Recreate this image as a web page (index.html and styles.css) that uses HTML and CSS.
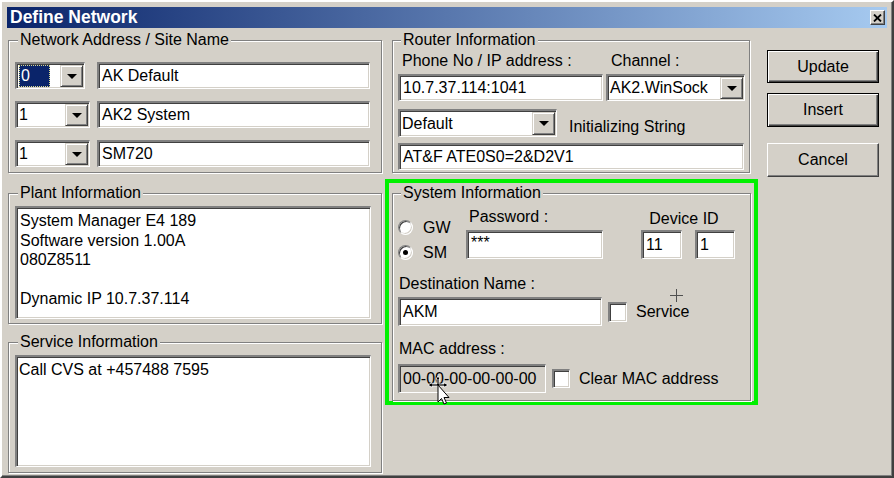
FILE: index.html
```html
<!DOCTYPE html>
<html lang="en">
<head>
    <meta charset="UTF-8">
    <title>Define Network</title>
    <link rel="stylesheet" href="styles.css">
</head>
<body>
    <div class="window">
        <div class="titlebar">
            <span class="title">Define Network</span>
            <span class="close">
                <svg width="9" height="8" viewBox="0 0 9 8"><path d="M1 0.5 L8 7.5 M8 0.5 L1 7.5" stroke="#000" stroke-width="1.8"/></svg>
            </span>
        </div>

        <div class="content">
            <!-- left column -->
            <div class="col-left">
                <div class="group net-group">
                    <span class="group-title">Network Address / Site Name</span>
                    <div class="net-rows">
                        <div class="net-row">
                            <div class="combo-cell">
                                <div class="combo combo-addr">
                                    <span class="combo-value"><span class="selected">0</span></span>
                                    <span class="drop"></span>
                                </div>
                            </div>
                            <div class="field name-field">AK Default</div>
                        </div>
                        <div class="net-row">
                            <div class="combo-cell">
                                <div class="combo combo-num">
                                    <span class="combo-value">1</span>
                                    <span class="drop"></span>
                                </div>
                            </div>
                            <div class="field name-field">AK2 System</div>
                        </div>
                        <div class="net-row">
                            <div class="combo-cell">
                                <div class="combo combo-num">
                                    <span class="combo-value">1</span>
                                    <span class="drop"></span>
                                </div>
                            </div>
                            <div class="field name-field">SM720</div>
                        </div>
                    </div>
                </div>

                <div class="group plant-group">
                    <span class="group-title">Plant Information</span>
                    <div class="memo plant-memo">System Manager E4 189<br>Software version 1.00A<br>080Z8511<br><br>Dynamic IP 10.7.37.114</div>
                </div>

                <div class="group service-group">
                    <span class="group-title">Service Information</span>
                    <div class="memo service-memo">Call CVS at +457488 7595</div>
                </div>
            </div>

            <!-- middle column -->
            <div class="col-mid">
                <div class="group router-group">
                    <span class="group-title">Router Information</span>
                    <div class="router-labels">
                        <span class="phone-label">Phone No / IP address :</span>
                        <span class="channel-label">Channel :</span>
                    </div>
                    <div class="router-row first">
                        <div class="field phone-field">10.7.37.114:1041</div>
                        <div class="combo channel-combo">
                            <span class="combo-value">AK2.WinSock</span>
                            <span class="drop"></span>
                        </div>
                    </div>
                    <div class="router-row second">
                        <div class="combo default-combo">
                            <span class="combo-value">Default</span>
                            <span class="drop"></span>
                        </div>
                        <span class="init-label">Initializing String</span>
                    </div>
                    <div class="router-row third">
                        <div class="field init-field">AT&amp;F ATE0S0=2&amp;D2V1</div>
                    </div>
                </div>

                <div class="highlight">
                    <div class="group system-group">
                        <span class="group-title">System Information</span>
                        <div class="sys-top">
                            <div class="radios">
                                <div class="radio-row"><span class="radio"></span><span>GW</span></div>
                                <div class="radio-row"><span class="radio checked"></span><span>SM</span></div>
                            </div>
                            <div class="password-col">
                                <div class="pw-label">Password :</div>
                                <div class="field pw-field">***</div>
                            </div>
                            <div class="device-col">
                                <div class="device-label">Device ID</div>
                                <div class="device-inputs">
                                    <div class="field dev-a">11</div>
                                    <div class="field dev-b">1</div>
                                </div>
                            </div>
                        </div>

                        <div class="sys-label dest-label">Destination Name :</div>
                        <div class="sys-row dest-row">
                            <div class="field dest-field">AKM</div>
                            <span class="checkbox"></span>
                            <span class="check-label">Service</span>
                        </div>

                        <div class="sys-label mac-label">MAC address :</div>
                        <div class="sys-row mac-row">
                            <div class="field mac-field">00-00-00-00-00-00</div>
                            <span class="checkbox small"></span>
                            <span class="check-label">Clear MAC address</span>
                        </div>

                        <span class="crosshair"></span>
                        <svg class="pointer" width="24" height="32" viewBox="0 0 24 32">
                            <path d="M11 3 L13 6 L12 6 L12 11 L17 11 L17 9.5 L21 12 L17 14.5 L17 13 L5 13 L5 14.5 L1 12 L5 9.5 L5 11 L10 11 L10 6 L9 6 Z" fill="#000" stroke="#fff" stroke-width="0.8"/>
                            <path d="M11 12 L11 29 L14.5 25.5 L17 31 L19.5 30 L17 24.5 L22 24.5 Z" fill="#fff" stroke="#000" stroke-width="1"/>
                        </svg>
                    </div>
                </div>
            </div>

            <!-- buttons -->
            <div class="col-buttons">
                <div class="btn default update">Update</div>
                <div class="btn default insert">Insert</div>
                <div class="btn cancel">Cancel</div>
            </div>
        </div>
    </div>
</body>
</html>
```

FILE: styles.css
```css
* {
    box-sizing: border-box;
}

body {
    margin: 0;
    font-family: "Liberation Sans", Arial, sans-serif;
    font-size: 16px;
    color: #000;
    background: #d4d0c8;
}

.window {
    width: 894px;
    height: 478px;
    background: #d4d0c8;
    border: 2px solid;
    border-color: #ffffff #404040 #404040 #ffffff;
    box-shadow: inset -1px -1px #808080;
    padding: 5px;
    overflow: hidden;
}

/* title bar */
.titlebar {
    height: 21px;
    display: flex;
    align-items: center;
    justify-content: space-between;
    padding: 0 2px 0 3px;
    background: linear-gradient(to right, #0a246a, #a6caf0);
}

.title {
    color: #fff;
    font-weight: bold;
    font-size: 17.5px;
    line-height: 21px;
}

.close {
    width: 15px;
    height: 15px;
    display: flex;
    align-items: center;
    justify-content: center;
    background: #d4d0c8;
    border: 1px solid;
    border-color: #ffffff #404040 #404040 #ffffff;
    box-shadow: inset -1px -1px #808080;
}

.content {
    display: flex;
    align-items: flex-start;
    margin: 12px 0 0 1px;
}

/* etched group frame */
.group {
    border: 1px solid #808080;
    box-shadow: inset 1px 1px #fff, 1px 1px #fff;
}

.group-title {
    display: table;
    margin: -10px 0 0 9px;
    padding: 0 2px;
    line-height: 18px;
    background: #d4d0c8;
}

.router-group .group-title,
.system-group .group-title {
    margin-left: 3px;
}

/* sunken controls */
.field, .combo, .memo {
    background: #fff;
    border-style: solid;
    border-width: 2px 1px 1px 2px;
    border-color: #808080 #ffffff #ffffff #808080;
    box-shadow: inset 1px 1px #404040, inset -1px -1px #d4d0c8;
}

.field {
    display: flex;
    align-items: center;
    padding-left: 3px;
    white-space: nowrap;
}

.combo {
    display: flex;
    align-items: stretch;
}

.combo-value {
    flex: 1;
    display: flex;
    align-items: center;
    padding-left: 2px;
    white-space: nowrap;
    overflow: hidden;
}

.drop {
    width: 23px;
    margin: 1px 1px 1px 0;
    display: flex;
    align-items: center;
    justify-content: center;
    background: #d4d0c8;
    border: 1px solid;
    border-color: #d4d0c8 #404040 #404040 #d4d0c8;
    box-shadow: inset 1px 1px #fff, inset -1px -1px #808080;
}

.drop::after {
    content: "";
    border-left: 5px solid transparent;
    border-right: 5px solid transparent;
    border-top: 5px solid #000;
}

/* left column */
.col-left {
    width: 374px;
    display: flex;
    flex-direction: column;
}

.net-group {
    height: 133px;
}

.net-rows {
    margin: 13px 0 0 6px;
    display: flex;
    flex-direction: column;
    gap: 12px;
}

.net-row {
    display: flex;
    height: 27px;
}

.combo-cell {
    width: 82px;
}

.combo-addr {
    width: 70px;
    height: 100%;
}

.combo-num {
    width: 75px;
    height: 100%;
}

.selected {
    display: flex;
    align-items: center;
    height: 100%;
    width: 31px;
    margin: 1px 0 1px 1px;
    padding-left: 2px;
    background: #0a246a;
    color: #fff;
    outline: 1px dotted #d8d890;
    outline-offset: -1px;
}

.combo-addr .combo-value {
    padding: 1px 2px 1px 1px;
}

.name-field {
    width: 273px;
    height: 100%;
}

.plant-group {
    margin-top: 20px;
    height: 131px;
}

.service-group {
    margin-top: 18px;
    height: 131px;
}

.memo {
    margin: 4px 0 0 6px;
    width: 356px;
    padding: 3px 3px;
    line-height: 19.5px;
}

.plant-memo {
    height: 113px;
}

.service-memo {
    height: 112px;
    padding-left: 2px;
}

/* middle column */
.col-mid {
    width: 373px;
    margin-left: 3px;
}

.router-group {
    margin-left: 7px;
    width: 358px;
    height: 133px;
    padding-left: 5px;
}

.router-labels {
    display: flex;
    margin-top: 3px;
    line-height: 18px;
}

.phone-label {
    width: 208px;
    padding-left: 4px;
}

.channel-label {
    padding-left: 5px;
}

.router-row {
    display: flex;
}

.router-row.first {
    margin-top: 4px;
    height: 27px;
    gap: 3px;
}

.phone-field {
    width: 205px;
}

.channel-combo {
    width: 139px;
}

.router-row.second {
    margin-top: 8px;
    height: 28px;
}

.default-combo {
    width: 159px;
}

.init-label {
    align-self: flex-end;
    margin: 0 0 1px 12px;
    line-height: 18px;
}

.router-row.third {
    margin-top: 6px;
    height: 27px;
}

.init-field {
    width: 346px;
}

/* highlighted system information */
.highlight {
    margin-top: 6px;
    border: 4px solid #00f000;
    padding: 10px 0 0 3px;
}

.system-group {
    position: relative;
    width: 359px;
    height: 208px;
    padding-left: 5px;
}

.sys-top {
    display: flex;
    align-items: flex-start;
    margin-top: 6px;
}

.radios {
    width: 68px;
    margin-top: 12px;
}

.radio-row {
    display: flex;
    align-items: center;
    height: 15px;
    gap: 10px;
    line-height: 18px;
}

.radio-row + .radio-row {
    margin-top: 10px;
}

.radio {
    position: relative;
    width: 15px;
    height: 15px;
    border-radius: 50%;
    background: #fff;
    border: 1px solid;
    border-color: #808080 #ffffff #ffffff #808080;
    box-shadow: inset 1px 1px #404040, inset -1px -1px #d4d0c8;
}

.radio.checked::after {
    content: "";
    position: absolute;
    left: 4px;
    top: 4px;
    width: 5px;
    height: 5px;
    border-radius: 50%;
    background: #000;
}

.password-col {
    width: 137px;
}

.pw-label {
    line-height: 18px;
    padding-left: 3px;
}

.pw-field {
    margin-top: 4px;
    height: 29px;
    align-items: flex-start;
    padding-top: 2px;
}

.device-col {
    margin-left: 38px;
    width: 94px;
}

.device-label {
    margin-top: 2px;
    line-height: 18px;
    text-align: center;
    padding-right: 8px;
}

.device-inputs {
    display: flex;
    gap: 13px;
    margin-top: 2px;
}

.dev-a {
    width: 41px;
    height: 29px;
}

.dev-b {
    width: 40px;
    height: 29px;
}

.sys-label {
    line-height: 18px;
    padding-left: 1px;
}

.dest-label {
    margin-top: 15px;
}

.mac-label {
    margin-top: 14px;
}

.sys-row {
    display: flex;
    align-items: center;
}

.dest-row {
    margin-top: 4px;
}

.mac-row {
    margin-top: 6px;
}

.dest-field {
    width: 204px;
    height: 29px;
}

.mac-field {
    width: 148px;
    height: 29px;
    background: #d4d0c8;
}

.checkbox {
    width: 19px;
    height: 20px;
    margin-left: 6px;
    background: #fff;
    border-style: solid;
    border-width: 2px 1px 1px 2px;
    border-color: #808080 #ffffff #ffffff #808080;
    box-shadow: inset 1px 1px #404040, inset -1px -1px #d4d0c8;
}

.checkbox.small {
    width: 18px;
    height: 19px;
}

.check-label {
    margin-left: 9px;
    line-height: 18px;
}

/* stray crosshair and mouse pointer captured in the screenshot */
.crosshair {
    position: absolute;
    left: 277px;
    top: 95px;
    width: 13px;
    height: 13px;
    background:
        linear-gradient(#505050, #505050) 6px 0 / 1px 13px no-repeat,
        linear-gradient(#505050, #505050) 0 6px / 13px 1px no-repeat;
}

.pointer {
    position: absolute;
    left: 34px;
    top: 179px;
}

/* buttons */
.col-buttons {
    width: 112px;
    margin: 10px 0 0 9px;
}

.btn {
    display: flex;
    align-items: center;
    justify-content: center;
    background: #d4d0c8;
    border: 1px solid;
    border-color: #ffffff #404040 #404040 #ffffff;
    box-shadow: inset -1px -1px #808080, inset 1px 1px #d4d0c8;
}

.btn.default {
    border: 1px solid #000;
    box-shadow: inset 1px 1px #fff, inset -1px -1px #404040, inset -2px -2px #808080;
}

.update {
    height: 33px;
}

.insert {
    margin-top: 10px;
    height: 34px;
}

.cancel {
    margin-top: 16px;
    height: 34px;
}
```
